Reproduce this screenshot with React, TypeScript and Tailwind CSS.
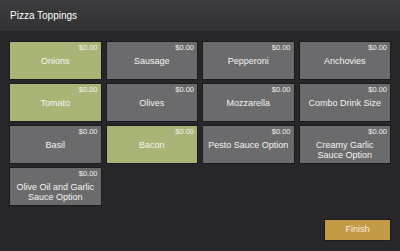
import React from 'react';

type Topping = { name: string; price: string; selected?: boolean };

const toppings: Topping[] = [
  { name: 'Onions', price: '$0.00', selected: true },
  { name: 'Sausage', price: '$0.00' },
  { name: 'Pepperoni', price: '$0.00' },
  { name: 'Anchovies', price: '$0.00' },
  { name: 'Tomato', price: '$0.00', selected: true },
  { name: 'Olives', price: '$0.00' },
  { name: 'Mozzarella', price: '$0.00' },
  { name: 'Combo Drink Size', price: '$0.00' },
  { name: 'Basil', price: '$0.00' },
  { name: 'Bacon', price: '$0.00', selected: true },
  { name: 'Pesto Sauce Option', price: '$0.00' },
  { name: 'Creamy Garlic Sauce Option', price: '$0.00' },
  { name: 'Olive Oil and Garlic Sauce Option', price: '$0.00' },
];

const App: React.FC = () => {
  return (
    <div className="w-[400px] h-[251px] flex flex-col bg-[#272628] font-['Liberation_Sans',Arial,sans-serif] overflow-hidden">
      <div className="h-[31px] shrink-0 flex items-center px-[10px] bg-gradient-to-b from-[#3c3b3d] to-[#323133] text-[10px] text-white">
        Pizza Toppings
      </div>

      <div className="flex-1 flex flex-col px-[9px] pt-[10px] pb-[10px]">
        <div className="grid grid-cols-4 gap-x-[4px] gap-y-[3px] auto-rows-[39px]">
          {toppings.map((t) => (
            <button
              key={t.name}
              className={`flex flex-col border border-[#1b1a1c] text-white ${
                t.selected ? 'bg-[#a8b576]' : 'bg-[#6b6a6c]'
              }`}
            >
              <span className="w-full text-right pr-[3px] pt-[1px] text-[7.5px] leading-[10px] text-[#f2f2f2]">
                {t.price}
              </span>
              <span className="w-full mt-[3px] px-[4px] text-center text-[9px] leading-[10px] text-[#f4f4f4]">
                {t.name}
              </span>
            </button>
          ))}
        </div>

        <div className="flex-1 flex items-end justify-end">
          <button className="w-[67px] h-[22px] bg-[#c39a45] border border-[#1b1a1c] text-[9px] text-[#f6f0e0]">
            Finish
          </button>
        </div>
      </div>
    </div>
  );
};

export default App;
